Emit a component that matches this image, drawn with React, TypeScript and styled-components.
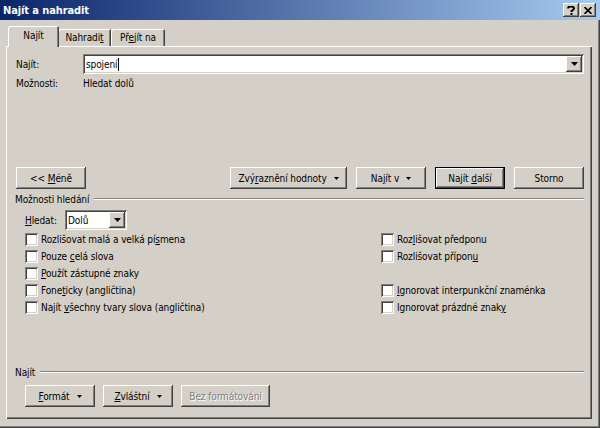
import React from "react";
import styled, {createGlobalStyle, css} from "styled-components";

const Global = createGlobalStyle`
    html, body {
        margin: 0;
        padding: 0;
        background: #d4d0c8;
    }
    body {
        font-family: "DejaVu Sans Condensed", "DejaVu Sans", sans-serif;
        font-stretch: condensed;
        font-size: 10px;
        letter-spacing: -0.1px;
        color: #000;
    }
`;

const raised = css`
    box-shadow: inset -1px -1px #404040, inset 1px 1px #fff, inset -2px -2px #808080, inset 2px 2px #d4d0c8;
`;

const sunken = css`
    box-shadow: inset 1px 1px #808080, inset -1px -1px #fff, inset 2px 2px #404040, inset -2px -2px #d4d0c8;
`;

const Window = styled.div`
    width: 600px;
    height: 428px;
    box-sizing: border-box;
    background: #d4d0c8;
    box-shadow: inset -1px -1px #404040, inset -2px -2px #808080;
    display: flex;
    flex-direction: column;
    overflow: hidden;
`;

const TitleBar = styled.div`
    height: 20px;
    flex: none;
    display: flex;
    align-items: center;
    padding: 0 4px 0 3px;
    background: linear-gradient(to right, #0a246a, #a6caf0);
    color: #fff;
    font-size: 11px;
    font-weight: bold;
`;

const Title = styled.span`
    flex: 1;
`;

const CaptionButton = styled.button`
    width: 16px;
    height: 14px;
    padding: 0;
    border: 0;
    background: #d4d0c8;
    ${raised};
    display: flex;
    align-items: center;
    justify-content: center;
    & + & {
        margin-left: 1px;
    }
`;

const Body = styled.div`
    flex: 1;
    display: flex;
    flex-direction: column;
    padding: 7px 8px 9px 6px;
`;

const TabRow = styled.div`
    display: flex;
    align-items: flex-end;
    height: 20px;
    padding-left: 2px;
    margin-bottom: -1px;
    position: relative;
    z-index: 1;
`;

const Tab = styled.div<{$active?: boolean; $w: number}>`
    width: ${(p) => p.$w}px;
    height: 17px;
    display: flex;
    align-items: center;
    justify-content: center;
    background: #d4d0c8;
    border-radius: 2px 2px 0 0;
    box-shadow: inset 1px 1px #fff, inset -1px 0 #404040, inset -2px 0 #808080;
    margin-bottom: 1px;
    ${(p) =>
        p.$active &&
        css`
            height: 21px;
            margin: 0 -1px 0 0;
            padding-bottom: 2px;
            box-sizing: border-box;
            position: relative;
            z-index: 2;
        `}
`;

const Panel = styled.div`
    flex: 1;
    display: flex;
    flex-direction: column;
    padding: 8px 8px 12px 10px;
    box-shadow: inset 1px 1px #fff, inset -1px -1px #404040, inset -2px -2px #808080;
`;

const U = styled.span`
    text-decoration: underline;
    text-underline-offset: 1px;
`;

const FieldRow = styled.div<{$indent?: number; $top?: number}>`
    display: flex;
    align-items: center;
    height: 20px;
    padding-left: ${(p) => p.$indent || 0}px;
    margin-top: ${(p) => p.$top || 0}px;
`;

const Label = styled.span<{$w?: number}>`
    width: ${(p) => p.$w || 67}px;
    flex: none;
`;

const Combo = styled.div<{$w?: number}>`
    ${(p) => (p.$w ? `width: ${p.$w}px;` : "flex: 1;")}
    height: 20px;
    box-sizing: border-box;
    background: #fff;
    ${sunken};
    display: flex;
    align-items: center;
    padding: 2px 2px 2px 3px;
`;

const ComboText = styled.span`
    flex: 1;
    display: flex;
    align-items: center;
`;

const Caret = styled.span`
    width: 1px;
    height: 13px;
    background: #000;
    margin-left: 1px;
`;

const DropButton = styled.div`
    width: 16px;
    height: 16px;
    background: #d4d0c8;
    ${raised};
    display: flex;
    align-items: center;
    justify-content: center;
`;

const InfoRow = styled.div`
    display: flex;
    align-items: center;
    height: 16px;
    margin-top: 1px;
`;

const Spacer = styled.div`
    flex: 1;
`;

const ButtonRow = styled.div<{$indent?: number; $gap?: number; $top?: number}>`
    display: flex;
    gap: ${(p) => p.$gap || 9}px;
    padding-left: ${(p) => p.$indent || 0}px;
    margin-top: ${(p) => p.$top || 0}px;
`;

const Button = styled.button<{$w?: number; $default?: boolean}>`
    width: ${(p) => p.$w || 70}px;
    height: 22px;
    padding: 0;
    border: 0;
    font: inherit;
    letter-spacing: inherit;
    color: #000;
    background: #d4d0c8;
    display: flex;
    align-items: center;
    justify-content: center;
    gap: 7px;
    ${raised};
    ${(p) =>
        p.$default &&
        css`
            box-shadow: inset 0 0 0 1px #000, inset -2px -2px #404040, inset 2px 2px #fff,
                inset -3px -3px #808080;
        `}
    &:disabled {
        color: #808080;
        text-shadow: 1px 1px #fff;
    }
`;

const Push = styled.div`
    flex: 1;
`;

const Arrow = () => (
    <svg width="5" height="3" viewBox="0 0 5 3">
        <path d="M0 0h5L2.5 3z" fill="#000" />
    </svg>
);

const ComboArrow = () => (
    <svg width="7" height="4" viewBox="0 0 7 4">
        <path d="M0 0h7L3.5 4z" fill="#000" />
    </svg>
);

const GroupHeader = styled.div<{$top?: number}>`
    display: flex;
    align-items: center;
    height: 14px;
    margin-left: -1px;
    margin-top: ${(p) => p.$top || 0}px;
    &::after {
        content: "";
        flex: 1;
        height: 1px;
        margin-left: 5px;
        background: #808080;
        border-bottom: 1px solid #fff;
    }
`;

const Options = styled.div`
    display: grid;
    grid-template-columns: 356px 1fr;
    grid-auto-rows: 17px;
    padding-left: 9px;
    margin-top: 1px;
    margin-bottom: 49px;
`;

const Check = styled.label`
    display: flex;
    align-items: center;
    gap: 3px;
`;

const Box = styled.span`
    width: 13px;
    height: 13px;
    flex: none;
    box-sizing: border-box;
    background: #fff;
    ${sunken};
`;

const Empty = styled.div``;

const opt = (pre: string, u: string, post: string) => (
    <Check>
        <Box />
        <span>
            {pre}
            <U>{u}</U>
            {post}
        </span>
    </Check>
);

export default function App() {
    return (
        <Window>
            <Global />
            <TitleBar>
                <Title>Najít a nahradit</Title>
                <CaptionButton>
                    <svg width="8" height="9" viewBox="0 0 8 9">
                        <path
                            d="M1 2.5C1 1 2 0.5 4 0.5S7 1 7 2.5 5 4.5 4.5 5V6"
                            stroke="#000"
                            strokeWidth="2"
                            fill="none"
                        />
                        <rect x="3.5" y="7" width="2" height="2" fill="#000" />
                    </svg>
                </CaptionButton>
                <CaptionButton>
                    <svg width="8" height="7" viewBox="0 0 8 7">
                        <path d="M0.5 0L7.5 7M7.5 0L0.5 7" stroke="#000" strokeWidth="1.6" />
                    </svg>
                </CaptionButton>
            </TitleBar>
            <Body>
                <TabRow>
                    <Tab $active $w={51}>
                        <span>
                            Na<U>j</U>ít
                        </span>
                    </Tab>
                    <Tab $w={53}>
                        <span>
                            Nahradi<U>t</U>
                        </span>
                    </Tab>
                    <Tab $w={54}>
                        <span>
                            Př<U>e</U>jít na
                        </span>
                    </Tab>
                </TabRow>
                <Panel>
                    <FieldRow>
                        <Label>
                            Na<U>j</U>ít:
                        </Label>
                        <Combo>
                            <ComboText>
                                spojení
                                <Caret />
                            </ComboText>
                            <DropButton>
                                <ComboArrow />
                            </DropButton>
                        </Combo>
                    </FieldRow>
                    <InfoRow>
                        <Label>Možnosti:</Label>
                        <span>Hledat dolů</span>
                    </InfoRow>
                    <Spacer />
                    <ButtonRow>
                        <Button>
                            <span>
                                &lt;&lt; <U>M</U>éně
                            </span>
                        </Button>
                        <Push />
                        <Button $w={117}>
                            <span>
                                Zvý<U>r</U>aznění hodnoty
                            </span>
                            <Arrow />
                        </Button>
                        <Button>
                            <span>
                                Na<U>j</U>ít v
                            </span>
                            <Arrow />
                        </Button>
                        <Button $default>
                            <span>
                                Najít <U>d</U>alší
                            </span>
                        </Button>
                        <Button>Storno</Button>
                    </ButtonRow>
                    <GroupHeader $top={3}>Možnosti hledání</GroupHeader>
                    <FieldRow $indent={9} $top={4}>
                        <Label $w={40}>
                            <U>H</U>ledat:
                        </Label>
                        <Combo $w={62}>
                            <ComboText>Dolů</ComboText>
                            <DropButton>
                                <ComboArrow />
                            </DropButton>
                        </Combo>
                    </FieldRow>
                    <Options>
                        {opt("Rozlišovat malá a velká pí", "s", "mena")}
                        {opt("Roz", "l", "išovat předponu")}
                        {opt("Pouze ", "c", "elá slova")}
                        {opt("Rozlišovat přípon", "u", "")}
                        {opt("", "P", "oužít zástupné znaky")}
                        <Empty />
                        {opt("Fone", "t", "icky (angličtina)")}
                        {opt("", "I", "gnorovat interpunkční znaménka")}
                        {opt("Najít ", "v", "šechny tvary slova (angličtina)")}
                        {opt("Ignorovat prázdné znak", "y", "")}
                    </Options>
                    <GroupHeader>Najít</GroupHeader>
                    <ButtonRow $indent={9} $gap={8} $top={6}>
                        <Button>
                            <span>
                                <U>F</U>ormát
                            </span>
                            <Arrow />
                        </Button>
                        <Button>
                            <span>
                                <U>Z</U>vláštní
                            </span>
                            <Arrow />
                        </Button>
                        <Button $w={89} disabled>
                            Bez formátování
                        </Button>
                    </ButtonRow>
                </Panel>
            </Body>
        </Window>
    );
}
